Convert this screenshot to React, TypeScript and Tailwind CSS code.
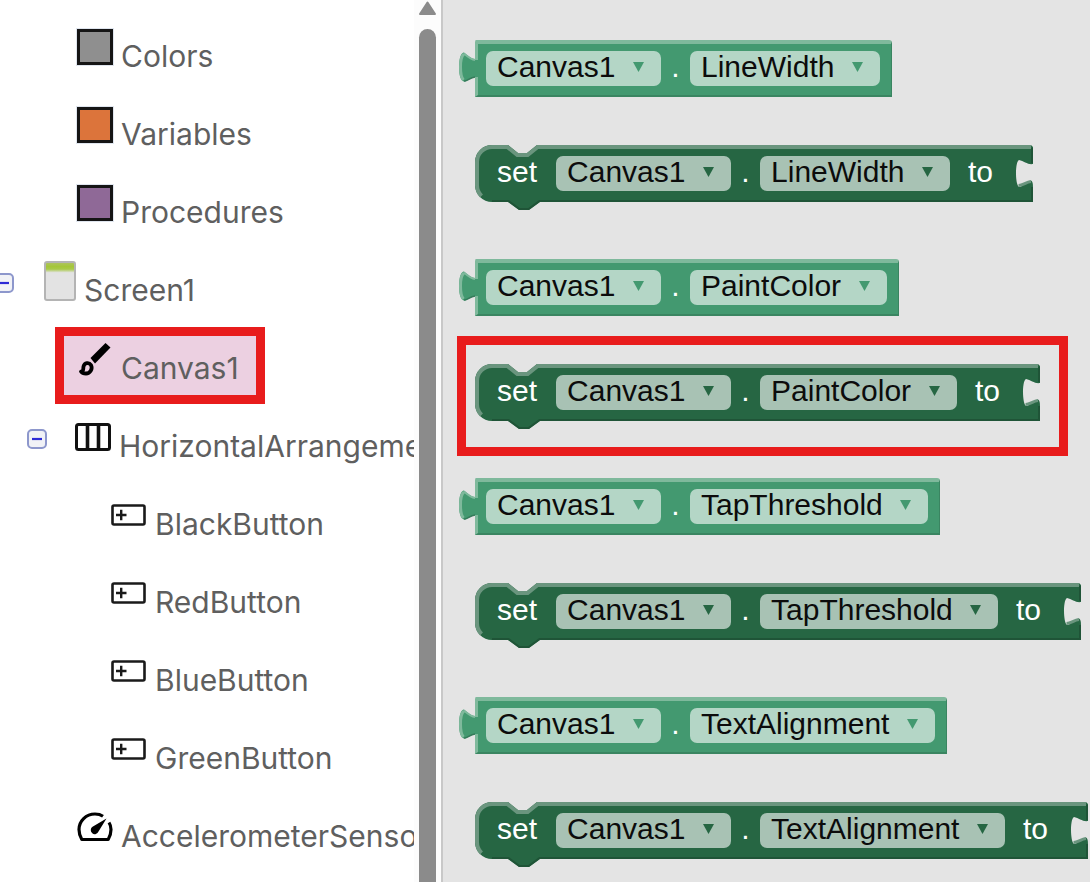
import type { ReactNode } from "react";

const textFont = "font-['Inter',sans-serif]";

/* ---------- Icons of the component tree ---------- */

function ScreenIcon() {
  return (
    <svg width="32" height="40" viewBox="0 0 32 40" aria-hidden="true">
      <defs>
        <linearGradient id="screen-top" x1="0" y1="0" x2="0" y2="1">
          <stop offset="0" stopColor="#b0c266" />
          <stop offset="0.12" stopColor="#a4c639" />
          <stop offset="0.19" stopColor="#a9c94a" />
          <stop offset="0.28" stopColor="#e3e3e3" />
          <stop offset="1" stopColor="#e3e3e3" />
        </linearGradient>
      </defs>
      <rect x="1" y="1" width="30" height="38" rx="2" fill="url(#screen-top)" stroke="#b4b4b4" strokeWidth="2" />
    </svg>
  );
}

function BrushIcon() {
  return (
    <svg width="36" height="36" viewBox="0 0 36 36" aria-hidden="true">
      <path d="M13.500 17 L28.500 2 L33.500 6.500 L18 22.500 Z" fill="#000" />
      <path
        d="M4 30.5 C7 30 6 28 6.5 25.5 C7.500 21.500 12 21 14 24 C16 28 13 32.500 9 32.500 C7 32.500 5 32 4 30.500 Z"
        fill="none"
        stroke="#000"
        strokeWidth="3.800"
        strokeLinejoin="round"
      />
    </svg>
  );
}

function ColumnsIcon() {
  return (
    <svg width="36" height="28" viewBox="0 0 36 28" aria-hidden="true">
      <rect x="1.500" y="1.500" width="33" height="25" rx="2" fill="#fff" stroke="#111" strokeWidth="3" />
      <path d="M12.500 1 V27 M23.500 1 V27" stroke="#111" strokeWidth="3.600" />
    </svg>
  );
}

function ButtonIcon() {
  return (
    <svg width="35" height="22" viewBox="0 0 35 22" aria-hidden="true">
      <rect x="1.500" y="1.500" width="32" height="19" rx="1.500" fill="#fff" stroke="#1a1a1a" strokeWidth="2.600" />
      <path d="M5 11 H15.500 M10.200 5.800 V16.200" stroke="#1a1a1a" strokeWidth="2.400" />
    </svg>
  );
}

function GaugeIcon() {
  return (
    <svg width="36" height="30" viewBox="0 0 36 30" aria-hidden="true">
      <path
        d="M26 4.200 C23.500 2.500 20.500 2 18 2 C9 2 2 9 2 17.500 C2 21 3 24.500 4.800 27.500 H31.200 C33 24.500 34 21 34 17.500 C34 15 33.300 12.500 32 10.500"
        fill="none"
        stroke="#000"
        strokeWidth="3.200"
        strokeLinejoin="round"
      />
      <path d="M29.500 6.500 L21.500 19.500 A4 4 0 1 1 15.500 14.800 Z" fill="#000" />
    </svg>
  );
}

function Collapse({ name, className }: { name: string; className: string }) {
  return (
    <button type="button" aria-label={`Collapse ${name}`} className={`shrink-0 ${className}`}>
      <svg width="20" height="20" viewBox="0 0 20 20" aria-hidden="true">
        <rect x="1" y="1" width="18" height="18" rx="4" fill="#f1f2f6" stroke="#8d97cc" strokeWidth="2" />
        <path d="M5 10 H15" stroke="#2d2ad6" strokeWidth="2.200" />
      </svg>
    </button>
  );
}

/* ---------- Component tree ---------- */

type RowProps = {
  label: string;
  icon: ReactNode;
  indent: string;
  iconBox?: string;
  toggle?: ReactNode;
  selected?: boolean;
};

function TreeRow({ label, icon, indent, iconBox = "w-11", toggle, selected }: RowProps) {
  return (
    <li className={`relative flex h-[78px] items-start ${indent}`}>
      {selected && (
        <span className="absolute left-[55px] top-0 h-[77px] w-[210px] border-[9px] border-[#e81c1c] bg-[#ecd0e1]" />
      )}
      {toggle}
      <a href={`#${label}`} className="relative flex items-start">
        <span className={`flex h-16 shrink-0 items-center ${iconBox}`}>{icon}</span>
        <span className="whitespace-nowrap text-[30px] leading-[82px] text-[#5f5f5f]">{label}</span>
      </a>
    </li>
  );
}

function Swatch({ color }: { color: string }) {
  return <span className={`size-9 border-[3px] border-[#151515] outline outline-[#dfe5ee] ${color}`} />;
}

function Sidebar() {
  return (
    <nav aria-label="Blocks" className="w-[414px] shrink-0 overflow-hidden bg-white">
      <ul className={`pt-[15px] ${textFont}`}>
        <TreeRow label="Colors" indent="pl-[77px]" icon={<Swatch color="bg-[#8f8f8f]" />} />
        <TreeRow label="Variables" indent="pl-[77px]" icon={<Swatch color="bg-[#dc743b]" />} />
        <TreeRow label="Procedures" indent="pl-[77px]" icon={<Swatch color="bg-[#8f6997]" />} />
        <TreeRow
          label="Screen1"
          indent="pl-0"
          iconBox="w-10"
          icon={<ScreenIcon />}
          toggle={<Collapse name="Screen1" className="-ml-1.5 mr-[30px] mt-6" />}
        />
        <TreeRow label="Canvas1" indent="pl-[77px]" icon={<BrushIcon />} selected />
        <TreeRow
          label="HorizontalArrangement1"
          indent="pl-[27px]"
          icon={<ColumnsIcon />}
          toggle={<Collapse name="HorizontalArrangement1" className="mr-7 mt-6" />}
        />
        <TreeRow label="BlackButton" indent="pl-[111px]" icon={<ButtonIcon />} />
        <TreeRow label="RedButton" indent="pl-[111px]" icon={<ButtonIcon />} />
        <TreeRow label="BlueButton" indent="pl-[111px]" icon={<ButtonIcon />} />
        <TreeRow label="GreenButton" indent="pl-[111px]" icon={<ButtonIcon />} />
        <TreeRow label="AccelerometerSensor1" indent="pl-[77px]" icon={<GaugeIcon />} />
      </ul>
    </nav>
  );
}

function Scrollbar() {
  return (
    <div className="flex w-[27px] shrink-0 flex-col items-center bg-[#fcfcfc]">
      <svg width="19" height="16" viewBox="0 0 19 16" className="mb-[13px] shrink-0" aria-hidden="true">
        <path d="M9.500 2.500 L17 14 H2 Z" fill="#8b8b8b" stroke="#8b8b8b" strokeWidth="2" strokeLinejoin="round" />
      </svg>
      <div className="w-[17px] flex-1 rounded-t-full bg-[#8b8b8b]" />
    </div>
  );
}

/* ---------- Blocks ---------- */

function Field({ value, label, tone }: { value: string; label: string; tone: "light" | "dark" }) {
  const box = tone === "light" ? "bg-[#b4d6c6]" : "bg-[#a8c2b4]";
  const arrow = tone === "light" ? "text-[#439970]" : "text-[#266643]";
  return (
    <span className="relative flex">
      <select
        aria-label={label}
        defaultValue={value}
        className={`h-[35px] appearance-none rounded-[7px] pb-[3px] pl-[11px] pr-[45px] leading-8 text-[#0c0c0c] ${box}`}
      >
        <option>{value}</option>
      </select>
      <svg
        width="11"
        height="10"
        viewBox="0 0 11 10"
        className={`pointer-events-none absolute right-[17px] top-[11px] ${arrow}`}
        aria-hidden="true"
      >
        <path d="M0 0 H11 L5.500 10 Z" fill="currentColor" />
      </svg>
    </span>
  );
}

function Dot() {
  return <span className="w-[29px] text-center">.</span>;
}

function Getter({ property }: { property: string }) {
  return (
    <div className="flex h-[57px] text-white">
      <svg width="16" height="57" viewBox="0 0 16 57" className="shrink-0" aria-hidden="true">
        <path
          d="M16 19 C12 18.500 8 15 5 12.500 C1.500 12 0 21 0 27 C0 34 1.500 41 5 41.500 C8 42 11 38 16 37.500 Z"
          fill="#439970"
        />
        <path
          d="M5 14 C2 16 1.500 22 1.500 27 C1.500 33 2.500 38 4.500 40"
          fill="none"
          stroke="#7fb99c"
          strokeWidth="3"
        />
        <path d="M5 13.500 C8 16 12 19.500 16 20" fill="none" stroke="#7fb99c" strokeWidth="2" />
        <path d="M5 41 C8 41.500 11 37.500 16 37" fill="none" stroke="#357a5a" strokeWidth="1.500" />
      </svg>
      <div className="relative flex items-start rounded-tl-[2px] rounded-tr-[3px] border-b-2 border-l-[3px] border-r border-t-4 border-b-[#3a8561] border-l-[#7fb99c] border-r-[#3a8561] border-t-[#7fb99c] bg-[#439970] pl-2 pr-[11px] pt-[7px]">
        <span className="absolute -left-[3px] top-4 h-[17px] w-[3px] bg-[#439970]" />
        <Field value="Canvas1" label="Component" tone="light" />
        <Dot />
        <Field value={property} label="Property" tone="light" />
      </div>
    </div>
  );
}

function Setter({ property, highlighted }: { property: string; highlighted?: boolean }) {
  return (
    <div className="relative ml-4 h-[57px] w-fit text-white">
      <div className="absolute inset-0 flex" aria-hidden="true">
        <svg width="70" height="66" viewBox="0 0 70 66" className="shrink-0">
          <path
            d="M0 17 A17 17 0 0 1 17 0 H33 L43 8 H52 L62 0 H70 V57 H65 L54 65 H44 L33 57 H17 A17 17 0 0 1 0 40 Z"
            fill="#266643"
          />
          <path
            d="M6.500 51 A15.500 15.500 0 0 1 2 40 V17 A15 15 0 0 1 17 2 H32.300 L42.300 10 H52.700 L62.700 2 H70"
            fill="none"
            stroke="#6a957e"
            strokeWidth="4"
          />
          <path d="M17 56 H33.500 L44.500 64 H53.500 L64.500 56 H70" fill="none" stroke="#1f5437" strokeWidth="2" />
        </svg>
        <div className="h-[57px] flex-1 border-b-2 border-t-4 border-b-[#1f5437] border-t-[#6a957e] bg-[#266643]" />
        <svg width="20" height="57" viewBox="0 0 20 57" className="shrink-0">
          <path
            d="M0 0 H18 L20 2 V19 C15 20 11 16 6 15 C3.500 16 3 24 3 28 C3 34 4 41 6 42 C10 42 13 36 18 35.500 C20 36.500 20 40 20 42 V57 H0 Z"
            fill="#266643"
          />
          <path d="M0 2 H18" stroke="#6a957e" strokeWidth="4" />
          <path d="M0 56 H19 V42 M19 3 V18" fill="none" stroke="#1f5437" strokeWidth="2" />
          <path d="M5.500 40.500 C10 40.500 13 37 18 36.500" fill="none" stroke="#6a957e" strokeWidth="3" />
        </svg>
      </div>
      <div className="relative flex items-start pl-[22px] pr-10 pt-[11px]">
        <span className="pr-[19px]">set</span>
        <Field value="Canvas1" label="Component" tone="dark" />
        <Dot />
        <Field value={property} label="Property" tone="dark" />
        <span className="pl-[18px]">to</span>
      </div>
      {highlighted && (
        <span className="pointer-events-none absolute -bottom-[35px] -left-[18px] -right-7 -top-7 border-[9px] border-[#e81c1c]" />
      )}
    </div>
  );
}

const properties = ["LineWidth", "PaintColor", "TapThreshold", "TextAlignment"];

export default function App() {
  return (
    <div className="flex h-screen overflow-hidden bg-white">
      <Sidebar />
      <Scrollbar />
      <main className="min-w-0 flex-1 overflow-hidden border-l-2 border-[#c8c8c8] bg-[#e4e4e4] pl-4 pt-10 font-['Liberation_Sans',Arial,sans-serif] text-[30px] leading-8">
        <div className="flex w-max flex-col gap-[57px]">
          {properties.map((property) => (
            <section key={property} className="flex flex-col items-start gap-12">
              <Getter property={property} />
              <Setter property={property} highlighted={property === "PaintColor"} />
            </section>
          ))}
        </div>
      </main>
    </div>
  );
}
